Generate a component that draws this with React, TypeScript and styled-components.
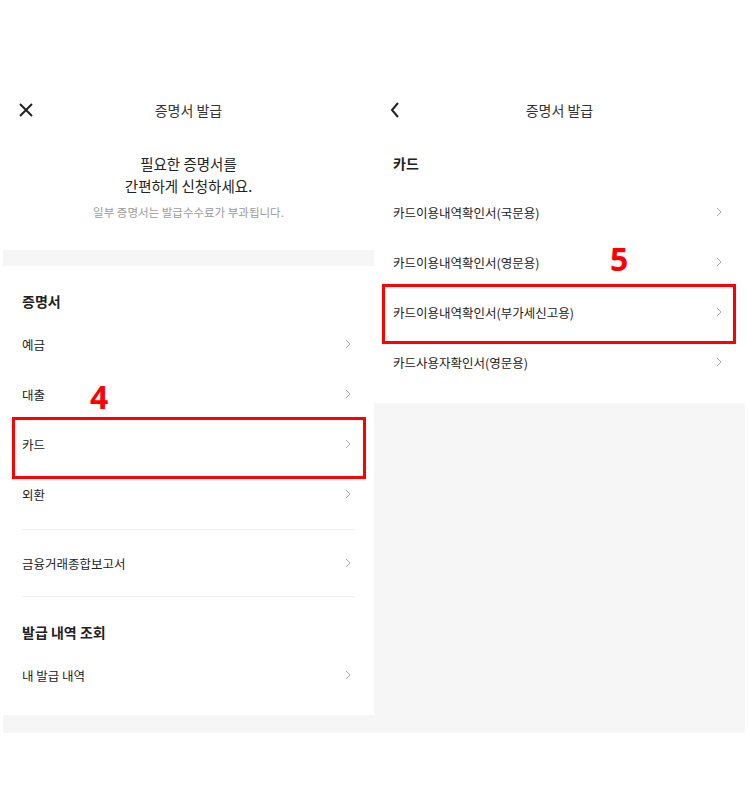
import React from "react";
import styled, { createGlobalStyle } from "styled-components";

const GlobalStyle = createGlobalStyle`
  body {
    margin: 0;
    background: #fff;
    color: #222;
    font-family: "Noto Sans CJK KR", "Noto Sans", sans-serif;
  }
`;

const Chevron = () => (
  <svg width="6" height="10" viewBox="0 0 6 10">
    <polyline points="1,1 5,5 1,9" fill="none" stroke="#a8a8a8" strokeWidth="1" />
  </svg>
);

const CloseIcon = () => (
  <svg width="14" height="14" viewBox="0 0 14 14">
    <path d="M1 1 L13 13 M13 1 L1 13" stroke="#222" strokeWidth="2" fill="none" />
  </svg>
);

const BackIcon = () => (
  <svg width="10" height="16" viewBox="0 0 10 16">
    <polyline points="8,1 2,8 8,15" fill="none" stroke="#222" strokeWidth="2" />
  </svg>
);

interface RowProps {
  label: string;
  children?: React.ReactNode;
}

function ListRow({ label, children }: RowProps) {
  return (
    <Row>
      <span>{label}</span>
      <Chevron />
      {children}
    </Row>
  );
}

function App() {
  return (
    <>
      <GlobalStyle />
      <Page>
        <Panel>
          <Header>
            <IconCell>
              <CloseIcon />
            </IconCell>
            <Title>증명서 발급</Title>
          </Header>
          <Intro>
            <Headline>
              필요한 증명서를
              <br />
              간편하게 신청하세요.
            </Headline>
            <Sub>일부 증명서는 발급수수료가 부과됩니다.</Sub>
          </Intro>
          <GrayBand $height={16} />
          <SectionTitle $top={25}>증명서</SectionTitle>
          <Group $bottom={10} $divider>
            <ListRow label="예금" />
            <ListRow label="대출">
              <Marker $left={68} $top={12}>4</Marker>
            </ListRow>
            <ListRow label="카드">
              <Highlight $left={-10} $right={-11} $top={-2} $height={62} />
            </ListRow>
            <ListRow label="외환" />
          </Group>
          <Group $top={8} $bottom={8} $divider>
            <ListRow label="금융거래종합보고서" />
          </Group>
          <SectionTitle $top={25}>발급 내역 조회</SectionTitle>
          <Group $top={8} $bottom={15}>
            <ListRow label="내 발급 내역" />
          </Group>
          <GrayBand $height={18} />
        </Panel>

        <Panel>
          <Header>
            <IconCell>
              <BackIcon />
            </IconCell>
            <Title>증명서 발급</Title>
          </Header>
          <SectionTitle $top={18}>카드</SectionTitle>
          <Group $top={14} $bottom={16}>
            <ListRow label="카드이용내역확인서(국문용)" />
            <ListRow label="카드이용내역확인서(영문용)">
              <Marker $left={217} $top={6}>5</Marker>
            </ListRow>
            <ListRow label="카드이용내역확인서(부가세신고용)">
              <Highlight $left={-11} $right={-10} $top={-3} $height={60} />
            </ListRow>
            <ListRow label="카드사용자확인서(영문용)" />
          </Group>
          <GrayBand $height={330} />
        </Panel>
      </Page>
    </>
  );
}

const Page = styled.div`
  display: flex;
  align-items: flex-start;
  padding: 85px 4px 0 3px;
`;

const Panel = styled.section`
  width: 371px;
  display: flex;
  flex-direction: column;
  background: #fff;
`;

const Header = styled.header`
  height: 50px;
  display: grid;
  grid-template-columns: 50px 1fr 50px;
  align-items: center;
`;

const IconCell = styled.div`
  display: flex;
  align-items: center;
  padding-left: 16px;
`;

const Title = styled.h1`
  margin: 0;
  text-align: center;
  font-size: 14px;
  font-weight: 400;
  color: #333;
`;

const Intro = styled.div`
  text-align: center;
  padding: 18px 0 30px;
`;

const Headline = styled.p`
  margin: 0;
  font-size: 14.5px;
  line-height: 22px;
  color: #222;
`;

const Sub = styled.p`
  margin: 7px 0 0;
  font-size: 11.5px;
  line-height: 16px;
  color: #9a9a9a;
`;

const GrayBand = styled.div<{ $height: number }>`
  height: ${(p) => p.$height}px;
  background: #f6f6f6;
`;

const SectionTitle = styled.h2<{ $top: number }>`
  margin: 0;
  padding: ${(p) => p.$top}px 19px 0;
  font-size: 14px;
  line-height: 20px;
  font-weight: 700;
  color: #222;
`;

const Group = styled.div<{ $top?: number; $bottom: number; $divider?: boolean }>`
  margin: 0 19px;
  padding: ${(p) => p.$top ?? 8}px 0 ${(p) => p.$bottom}px;
  border-bottom: ${(p) => (p.$divider ? "1px solid #f0f0f0" : "none")};
`;

const Row = styled.div`
  position: relative;
  height: 50px;
  display: flex;
  align-items: center;
  justify-content: space-between;
  padding-right: 4px;
  font-size: 12.5px;
  color: #222;
`;

const Highlight = styled.span<{ $left: number; $right: number; $top: number; $height: number }>`
  position: absolute;
  left: ${(p) => p.$left}px;
  right: ${(p) => p.$right}px;
  top: ${(p) => p.$top}px;
  height: ${(p) => p.$height}px;
  box-sizing: border-box;
  border: 3px solid #ff0000;
  pointer-events: none;
`;

const Marker = styled.span<{ $left: number; $top: number }>`
  position: absolute;
  left: ${(p) => p.$left}px;
  top: ${(p) => p.$top}px;
  font-family: "Noto Sans", sans-serif;
  font-size: 32px;
  line-height: 32px;
  font-weight: 700;
  color: #ff0000;
`;

export default App;
